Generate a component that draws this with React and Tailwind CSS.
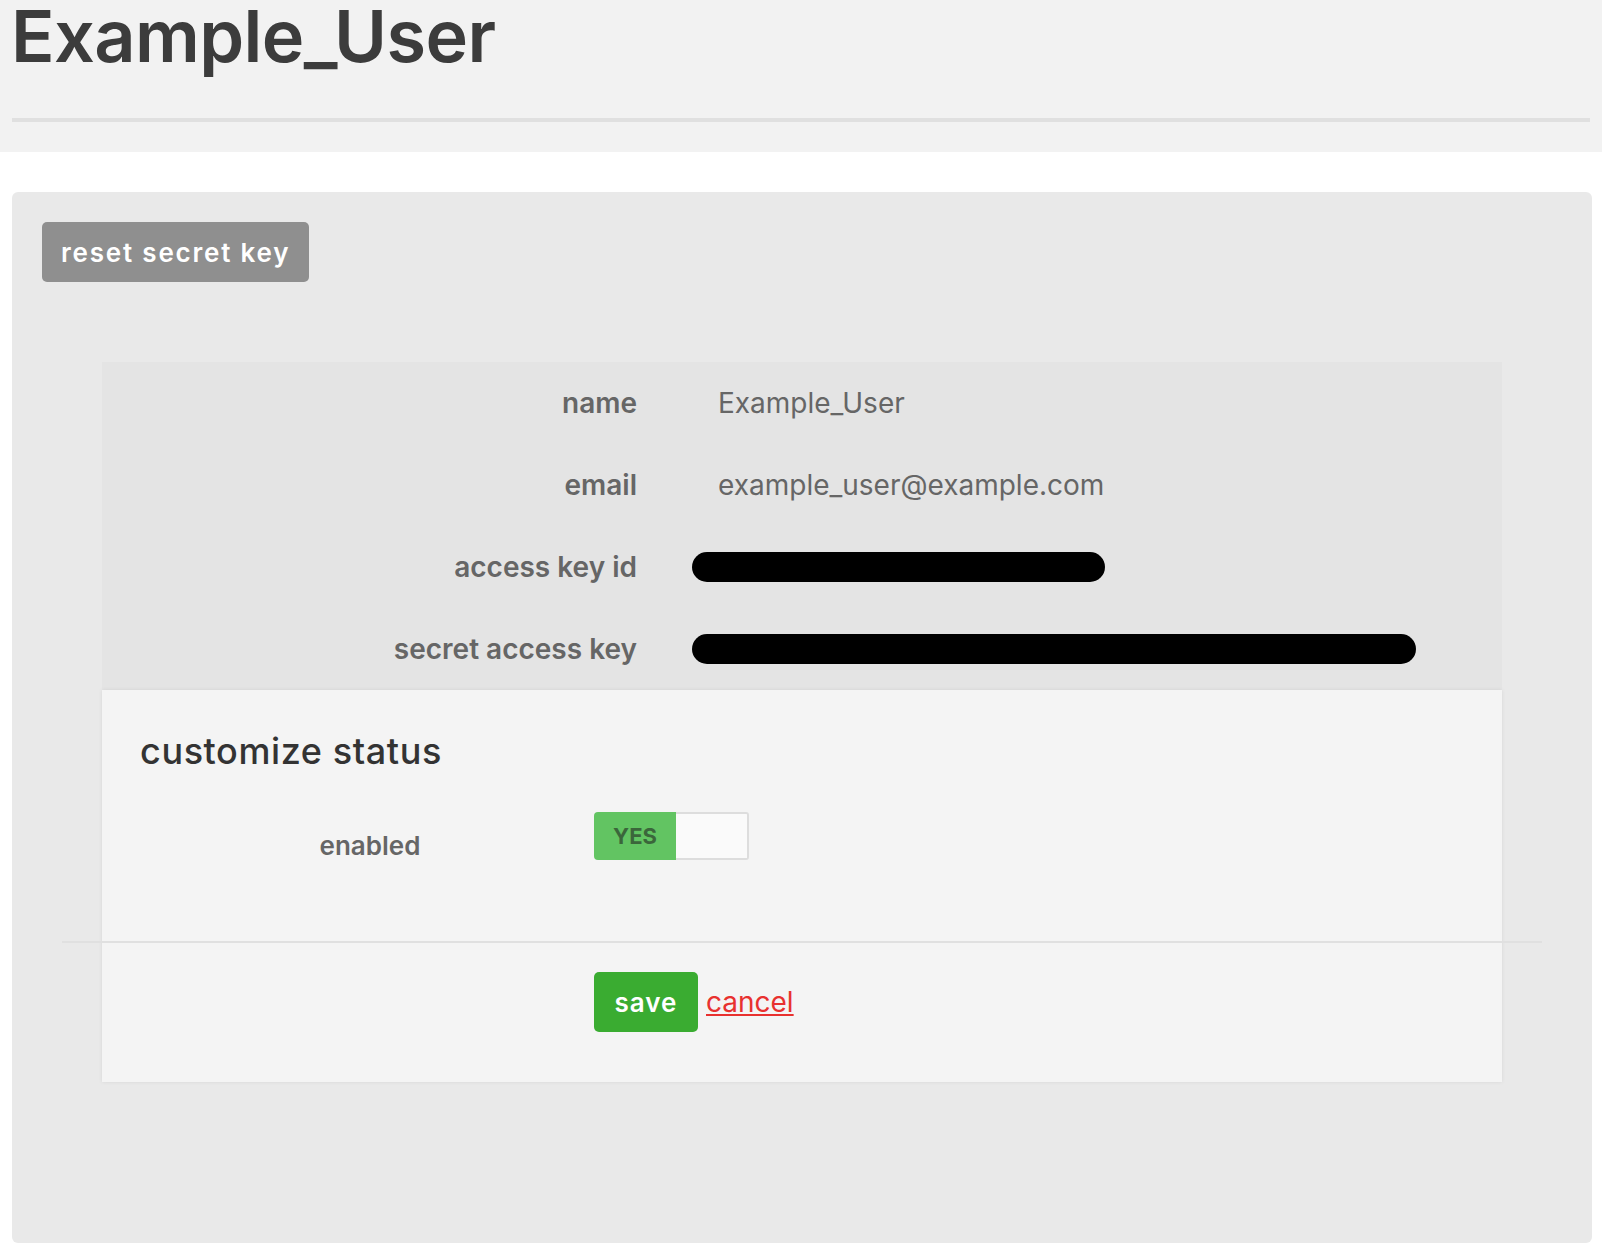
import React from "react";

const rows = [
  { label: "name", value: "Example_User" },
  { label: "email", value: "example_user@example.com" },
  { label: "access key id", bar: "w-[413px]" },
  { label: "secret access key", bar: "w-[724px]" },
];

const App = () => {
  return (
    <div className="min-h-screen bg-white font-['Inter','Liberation_Sans',sans-serif]">
      {/* header */}
      <header className="bg-[#f2f2f2] px-3 pb-[30px]">
        <h1 className="-ml-[1px] text-[72px] leading-[72px] font-semibold tracking-[-0.6px] text-[#3c3c3c]">
          Example_User
        </h1>
        <div className="mt-[46px] h-[4px] bg-[#e0e0e0]" />
      </header>

      {/* card */}
      <div className="ml-3 mr-[10px] mt-10 rounded-md bg-[#e9e9e9] p-[30px] pb-[161px]">
        <button className="h-[60px] rounded-[5px] bg-[#8f8f8f] px-[19px] text-[26px] font-semibold tracking-[1.8px] text-white">
          reset secret key
        </button>

        <div className="ml-[60px] mr-[60px] mt-[80px]">
          {/* info */}
          <div className="bg-[#e4e4e4]">
            {rows.map((row) => (
              <div key={row.label} className="grid h-[82px] grid-cols-[535px_1fr] items-center">
                <div className="text-right text-[28px] font-semibold text-[#666]">{row.label}</div>
                <div className="pl-[55px]">
                  {row.bar ? (
                    <div className={`h-[30px] rounded-full bg-black ${row.bar}`} />
                  ) : (
                    <span className="pl-[26px] text-[28px] text-[#666]">{row.value}</span>
                  )}
                </div>
              </div>
            ))}
          </div>

          {/* customize status */}
          <div className="bg-[#f4f4f4] pt-[39px] pb-[50px] shadow-[0_0_4px_rgba(0,0,0,0.08)]">
            <h2 className="pl-[38px] text-[36px] leading-[44px] font-medium tracking-[0.6px] text-[#333]">
              customize status
            </h2>
            <div className="mt-[39px] grid grid-cols-[492px_auto] items-start">
              <div className="pl-[44px] pt-[17px] text-center text-[26px] leading-[34px] font-semibold text-[#666]">
                enabled
              </div>
              <div className="flex h-[48px] w-[155px]">
                <div className="flex w-[82px] items-center justify-center rounded-l-[4px] bg-[#62c462] text-[22px] font-bold text-[#3b663b]">
                  YES
                </div>
                <div className="flex-1 rounded-r-[3px] border-2 border-l-0 border-[#dddddd] bg-[#fafafa]" />
              </div>
            </div>

            <div className="-mx-10 mt-[78px] h-[2px] bg-[#e0e0e0]" />

            <div className="mt-[29px] grid grid-cols-[492px_auto] items-center">
              <div />
              <div className="flex items-center gap-2">
                <button className="h-[60px] w-[104px] rounded-[5px] bg-[#3aac31] text-[26px] font-semibold tracking-[1px] text-white">
                  save
                </button>
                <a href="#" className="text-[28px] text-[#e8312f] underline">
                  cancel
                </a>
              </div>
            </div>
          </div>
        </div>
      </div>
    </div>
  );
};

export default App;
